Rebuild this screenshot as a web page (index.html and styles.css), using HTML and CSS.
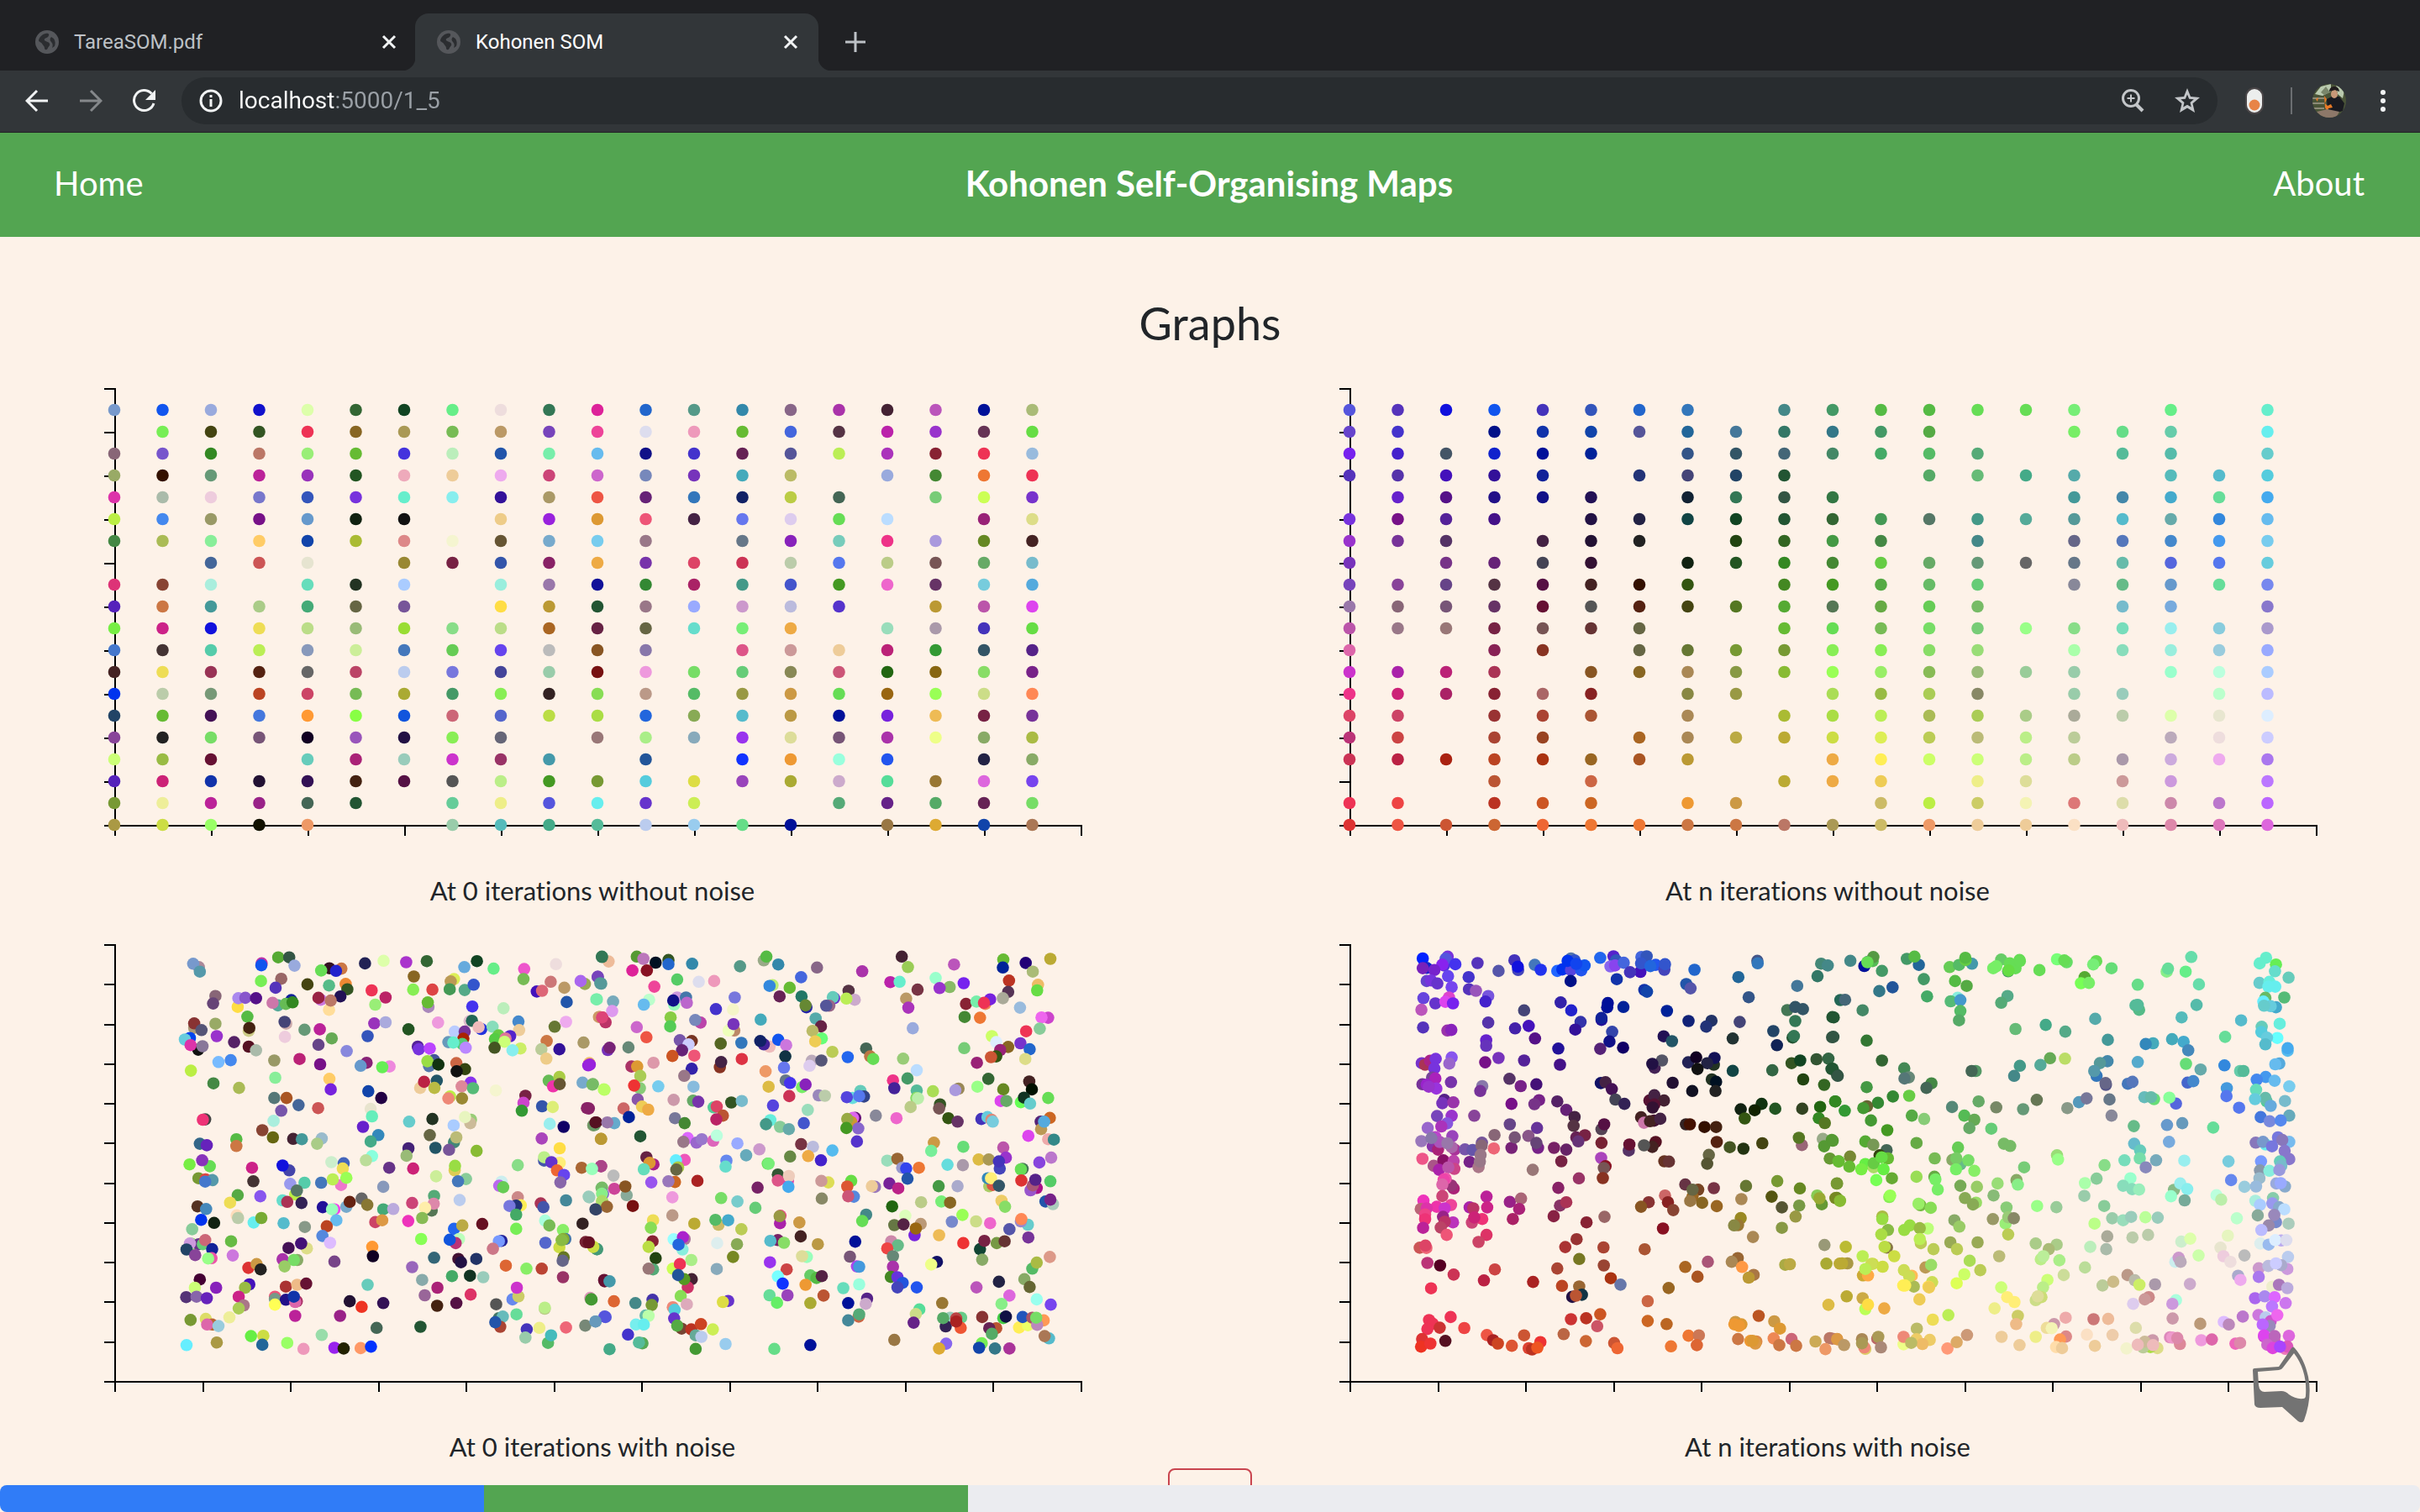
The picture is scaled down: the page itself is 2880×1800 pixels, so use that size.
FILE: index.html
```html
<!DOCTYPE html>
<html lang="en">
<head>
<meta charset="utf-8">
<title>Kohonen SOM</title>
<link rel="stylesheet" href="styles.css">
</head>
<body>
<div class="tabs">
  <div class="tab">
    <svg class="globe" viewBox="0 0 28 28"><circle cx="14" cy="14" r="14"/><path d="M12 4c5-1 5 2 3 4s-5 1-4 4c1 2 5 1 6 4 1 2-1 3-2 5-1 3-4 3-4 0 0-2-2-3-3-5s-4-2-4-4c1-4 4-7 8-8zM19 8l3 2c2 3 2 6 1 9l-3 2c1-3 1-5-1-7s-2-4 0-6z"/></svg>
    <span class="tab-title">TareaSOM.pdf</span>
    <button class="icon" aria-label="Close tab"><svg viewBox="0 0 18 18" width="18" height="18"><path d="M2 2l14 14M16 2L2 16"/></svg></button>
  </div>
  <div class="tab active">
    <svg class="globe" viewBox="0 0 28 28"><circle cx="14" cy="14" r="14"/><path d="M12 4c5-1 5 2 3 4s-5 1-4 4c1 2 5 1 6 4 1 2-1 3-2 5-1 3-4 3-4 0 0-2-2-3-3-5s-4-2-4-4c1-4 4-7 8-8zM19 8l3 2c2 3 2 6 1 9l-3 2c1-3 1-5-1-7s-2-4 0-6z"/></svg>
    <span class="tab-title">Kohonen SOM</span>
    <button class="icon" aria-label="Close tab"><svg viewBox="0 0 18 18" width="18" height="18"><path d="M2 2l14 14M16 2L2 16"/></svg></button>
  </div>
  <button class="icon new-tab" aria-label="New tab"><svg viewBox="0 0 24 24" width="24" height="24"><path d="M12 0v24M0 12h24"/></svg></button>
</div>
<div class="toolbar">
  <button class="icon" aria-label="Back"><svg viewBox="0 0 28 28" width="28" height="28"><path d="M27 14H3M14 2L2 14l12 12"/></svg></button>
  <button class="icon dim" aria-label="Forward"><svg viewBox="0 0 28 28" width="28" height="28"><path d="M1 14h24M14 2l12 12-12 12"/></svg></button>
  <button class="icon" aria-label="Reload"><svg viewBox="0 0 28 28" width="28" height="28"><path d="M25 17A12 12 0 1 1 22.500 5.500"/><path class="solid" d="M27 1v12H15z"/></svg></button>
  <div class="omnibox">
    <svg class="light" viewBox="0 0 28 28" width="28" height="28"><circle cx="14" cy="14" r="12"/><path d="M14 12v9M14 7v3"/></svg>
    <input class="url" aria-label="Address" value="localhost:5000/1_5">
    <button class="icon soft" aria-label="Zoom"><svg viewBox="0 0 28 28" width="28" height="28"><circle cx="12" cy="11" r="9.500"/><path d="M18 18l8 8" stroke-width="4"/><path d="M12 6.500v9M7.500 11h9" stroke-width="2"/></svg></button>
    <button class="icon soft" aria-label="Bookmark"><svg viewBox="0 0 30 30" width="30" height="30"><path class="solid" fill-rule="evenodd" d="M15 0l4 10 11 1-8.500 7.300L24 29l-9-5.600L6 29l2.500-10.700L0 11l11-1zM15 7.500l-2.200 5.300-5.600.5 4.300 3.700-1.300 5.600L15 19.700l4.800 2.900-1.300-5.600 4.300-3.700-5.600-.5z"/></svg></button>
  </div>
  <button class="icon" aria-label="Extension"><svg viewBox="0 0 22 32" width="22" height="32"><rect class="pill" x="1" y="1" width="20" height="30" rx="10"/><circle class="knob" cx="11" cy="21" r="6.500"/></svg></button>
  <span class="rule"></span>
  <button class="icon profile" aria-label="Profile"><svg class="avatar" viewBox="0 0 40 40" width="40" height="40"><rect width="40" height="40" fill="#4a5438"/><path fill="#b9c9ae" d="M3 12L10 3l12-3v9l-10 5zM28 0l10 8-2 9-6-5z"/><path fill="#79866a" d="M10 10l6-7 5 7-7 3z"/><path fill="#8d8b78" d="M0 16h14v2H0zM0 22h14v2H0zM0 28h14v2H0z"/><path fill="#191a20" d="M17 18l6-3 9 0 6 8-2 9-9 3-9-4z"/><path fill="#e87a26" d="M14 14l3 4-2 5 3 3 4-2 2 4-5 1-1 4-3-5zM4 18l3-2-1 5z"/><ellipse cx="26" cy="12" rx="4" ry="5" fill="#c79878"/><path fill="#221d1e" d="M20 9c0-8 12-8 12 0l-5-2z"/><path fill="#8d7869" d="M5 33l13-3 14 3-4 7H12z"/></svg></button>
  <button class="icon" aria-label="Menu"><svg viewBox="0 0 8 28" width="8" height="28"><g class="solid"><circle cx="4" cy="4" r="3"/><circle cx="4" cy="14" r="3"/><circle cx="4" cy="24" r="3"/></g></svg></button>
</div>
<header class="nav">
  <a href="#home">Home</a>
  <strong>Kohonen Self-Organising Maps</strong>
  <a class="end" href="#about">About</a>
</header>
<main class="page">
  <h1>Graphs</h1>
  <div class="charts">
    <figure><svg class="chart" id="grid-start" viewBox="0 0 1300 562"></svg><figcaption>At 0 iterations without noise</figcaption></figure>
    <figure><svg class="chart" id="grid-end" viewBox="0 0 1300 562"></svg><figcaption>At n iterations without noise</figcaption></figure>
    <figure><svg class="chart" id="noise-start" viewBox="0 0 1300 562"></svg><figcaption>At 0 iterations with noise</figcaption></figure>
    <figure><svg class="chart" id="noise-end" viewBox="0 0 1300 562"></svg><figcaption>At n iterations with noise</figcaption></figure>
  </div>
  <button class="action" aria-label="Stop"></button>
</main>
<div class="progress"><div class="bar blue" style="width:20%"></div><div class="bar green" style="width:20%"></div></div>
<svg class="horn" viewBox="0 0 73 94"><path fill-rule="evenodd" d="M3 29q0-2 2-2l29-2L49 3q2-3 4 0c8 9 13 20 16 34q5 24-5 52-2 4-7 1L38 73l-26 1q-6 0-7-4zM9 31l1 16q1 8 7 8l20-1q5 0 9 4 8 6 17 5 3 0 3-4 2-29-14-50L39 26q-2 3-5 3z"/></svg>
<script src="charts.js"></script>
</body>
</html>
```
FILE: styles.css
```css
* { box-sizing: border-box; }
body {
  margin: 0;
  height: 100vh;
  display: flex;
  flex-direction: column;
  overflow: hidden;
  background: #fdf2e8;
  color: #212529;
  font-family: Lato, sans-serif;
  font-variant-ligatures: none;
}
button { font: inherit; padding: 0; border: 0; background: none; }
svg { display: block; flex: none; }

.tabs { flex: none; display: flex; align-items: flex-end; height: 84px; padding-left: 14px; background: #202124; font-family: Roboto, sans-serif; }
.tab { position: relative; display: flex; align-items: center; gap: 18px; width: 480px; height: 68px; padding: 0 22px 0 28px; color: #bdc1c6; font-size: 24px; }
.tab.active { padding: 0 24px 0 26px; background: #323639; color: #fff; border-radius: 16px 16px 0 0; }
.tab.active::before, .tab.active::after { content: ""; position: absolute; bottom: 0; width: 16px; height: 16px; }
.tab.active::before { left: -16px; background: radial-gradient(circle at 0 0, #202124 16px, #323639 17px); }
.tab.active::after { right: -16px; background: radial-gradient(circle at 100% 0, #202124 16px, #323639 17px); }
.tab-title { flex: 1; }
.globe { width: 28px; height: 28px; fill: #55575b; }
.globe path { fill: #2b2d30; }
.new-tab { align-self: center; margin: 16px 0 0 32px; }

.icon { color: #f1f3f4; flex: none; }
.icon.new-tab { color: #bdc1c6; }
.icon svg, .light { fill: none; stroke: currentColor; stroke-width: 3; }
.icon .solid { fill: currentColor; stroke: none; }
.icon.dim { color: #85888b; }
.icon.soft { color: #c3c6c9; }
.light { color: #f1f3f4; }
.icon .pill { fill: #eceeed; stroke: #4b4749; stroke-width: 2; }
.icon .knob { fill: #e88446; stroke: none; }
.icon .avatar { stroke: none; border-radius: 50%; }

.toolbar { flex: none; display: flex; align-items: center; height: 74px; padding: 0 40px 2px 30px; background: #323639; border-bottom: 1px solid #202124; }
.toolbar > .icon { margin-right: 36px; }
.toolbar > .omnibox { margin-left: -6px; margin-right: 33px; }
.toolbar > .profile { margin-right: 40px; }
.toolbar > .icon:last-child { margin-right: 0; }
.rule { width: 2px; height: 32px; margin: 0 24px 0 -4px; background: #6b6e71; }
.omnibox { flex: 1; display: flex; align-items: center; gap: 19px; height: 56px; padding: 0 21px; border-radius: 28px; background: #282c2f; }
.omnibox .icon { margin-left: 17px; }
.url {
  flex: 1;
  min-width: 0;
  height: 40px;
  padding: 0;
  border: 0;
  outline: 0;
  font: 28px Roboto, sans-serif;
  color: transparent;
  background: linear-gradient(to right, #fff 114px, #9aa0a6 114px);
  -webkit-background-clip: text;
  background-clip: text;
}

.nav { flex: none; display: grid; grid-template-columns: 1fr auto 1fr; align-items: center; height: 124px; padding: 0 66px 4px 64px; background: #53a551; color: #fff; font-size: 40px; line-height: 60px; }
.nav a { color: inherit; text-decoration: none; }
.nav .end { text-align: right; }
.nav strong { font-size: 42px; font-weight: 700; }

.page { flex: 1; min-height: 0; overflow: hidden; padding-top: 67px; display: flex; flex-direction: column; align-items: center; }
h1 { flex: none; margin: 0 0 21px; font-size: 54px; line-height: 72px; font-weight: 400; }
.charts { flex: none; align-self: stretch; display: grid; grid-template-columns: 1fr 1fr; row-gap: 24px; margin: 0 -30px; }
figure { margin: 0; display: flex; flex-direction: column; align-items: center; }
figcaption { margin-top: 36px; font-size: 31px; line-height: 40px; }
.chart { width: 100%; max-width: 1300px; }
.axis { fill: none; stroke: #000; stroke-width: 2; }
.action { flex: none; width: 100px; height: 76px; margin-top: 6px; border: 2px solid #c9454f; border-radius: 8px; }

.progress { flex: none; display: flex; height: 32px; border-radius: 8px; overflow: hidden; background: #ebecf0; }
.bar.blue { background: #307cf7; }
.bar.green { background: #53a551; }
.horn { position: fixed; right: 129px; bottom: 104px; width: 73px; height: 94px; fill: #737373; }
```
FILE: charts.js
```js
// Plot area inside each chart's viewBox.
const LEFT = 82, TOP = 21, WIDTH = 1150, HEIGHT = 520;

function axes(ticks) {
  let d = `M${LEFT - 13} ${TOP}H${LEFT}V${TOP + HEIGHT}H${LEFT + WIDTH}v12`;
  for (let i = 0; i < ticks; i++) {
    d += `M${LEFT + Math.round(i * WIDTH / (ticks - 1))} ${TOP + HEIGHT}v12`;
    d += `M${LEFT} ${TOP + Math.round(i * HEIGHT / (ticks - 1))}h-13`;
  }
  return `<path class="axis" d="${d}"/>`;
}
const dot = (x, y, c) => `<circle cx="${(LEFT + x).toFixed(1)}" cy="${(TOP + y).toFixed(1)}" r="7.300" fill="#${c}"/>`;

// One row per line, one neuron per entry; "-" marks an empty cell.
function drawGrid(id, rows) {
  let out = axes(11);
  rows.trim().split("\n").forEach((row, r) => row.trim().split(/\s+/).forEach((c, i) => {
    if (c !== "-") out += dot(i * 57.5 - 1, 25 + r * 26, c);
  }));
  document.getElementById(id).innerHTML = out;
}

// Samples come in batches, each with its own origin and units per pixel.
function drawNoise(id, batches) {
  let out = axes(12);
  for (const b of batches) {
    for (const s of b.data.trim().split(/\s+/)) {
      const [x, y, c] = s.split(",");
      out += dot((x - b.x0) / b.kx, (y - b.y0) / b.ky, c);
    }
  }
  document.getElementById(id).innerHTML = out;
}

drawGrid("grid-start", `
79c 15e 9ad 11c dfa 363 142 6e8 edd 375 d29 26c 598 38a 868 a3a 423 b5b 019 ab7
- 7e5 441 352 e35 862 a95 7b5 b96 74b e49 dde e9b 6b3 46d 534 b2a 93c 635 6d4
867 75c 382 b76 9e7 6b3 43d beb 25a 7ea 6be 118 43c 625 559 be5 a3b 823 e35 9bd
9a6 310 697 b29 93b 252 eab ec9 eae c47 c6c 78b 73b 4ab bb6 - 9ad 483 e73 e35
d3a aba ecd 77c 35b 73d 6ec 8ee 319 a96 e54 627 37b 126 bc4 465 - 7c7 cf5 73c
be4 48e 996 718 69c 121 111 - ec8 92d d93 e57 424 67e dce 6d5 bdf - 927 dd8
484 ab5 8e9 fc6 14a ab3 d88 f5f5d0 653 7ac 7ce 978 - 678 82b 7cb e38 a9d 682 422
- - 469 c55 e6e4d0 - 983 724 35a 826 ea4 73a d46 c35 bca 57e bc8 755 6a6 7bc
d37 843 aed - 6db 232 acf - 9ed 97a 119 383 a26 498 45c 492 e6c 636 7cd 5ad
52b c74 499 ac8 4a7 664 759 - fd4 b93 253 978 9af c9c bbd 53c - b93 b5a d4e
7e4 c28 11d ed5 bd8 9b7 9d3 8d8 bd8 a62 624 664 6dc 7e7 ea4 - 9db a9a 43b 6d4
47c 433 5ca be5 89b ce9 47b 6c5 64e bbb 852 87a - d58 c99 ec9 b27 393 356 528
422 ed5 935 521 666 b46 bce 77d 449 9ca 711 e9d 7d6 6c7 885 c57 261 861 8d6 728
03e bca 797 b42 c46 7b5 aa3 496 8e5 322 8d5 b98 5b6 994 c94 6d5 961 9f5 cd8 f85
246 6b3 415 47d f93 8f4 15d c67 56c bd4 ad4 26d 8a5 5bc b94 019 72d eb5 724 739
849 222 7d6 757 102 95b 214 8e5 667 - 977 ae8 8ab 93e dd9 757 a3a ef8 8a6 ab4
cf7 9b4 613 - 6cb a27 9cb c3c 936 49a - 259 - 13f e93 9fd 25e - 224 8a6
52b c27 13a 213 315 421 514 555 be8 492 793 5cd dd4 94b aa3 cac 5d9 973 d6d 74e
793 ee9 b29 928 465 253 - 6c9 ee8 55d 6ee 63c ce5 - - 5a7 628 5a6 625 7d6
a94 cd4 9f6 110 e96 - - 9ca 5bb 4a8 5b9 bce 9ce 6d8 019 - 974 da3 14a a75`);

drawGrid("grid-end", `
55d 53b 11d 15e 43b 35b 26c 37b - 488 496 5b4 5b4 6d5 6d5 7e7 - 6e8 - 6ec
64c 43c - 018 13a 14a 559 269 479 376 378 496 5a4 - - 7e6 6d8 6ca - 6ee
72e 42c 456 12c 019 029 - 358 356 467 486 4a6 5b6 5a7 - - 5b9 5ba - 6cc
53b 53a 41b 319 129 - 237 447 246 253 - - 5a6 6b7 4a8 5aa - 5bb 5bc 5cd
- 62c 518 218 118 215 - 123 375 354 374 - - - - 499 48a 4ac 6d9 4ae
73d 718 529 418 - 214 224 144 142 253 363 495 576 498 5a9 599 5bc 6aa 38d 6be
93c 739 536 - 424 213 222 - 241 362 494 484 - 488 - 668 57b 48c 49e 7ce
73b - 738 627 445 313 - 121 252 382 483 6c4 6a6 697 666 678 6ba 56d 57e 6cd
74b 849 648 534 514 422 310 351 - 482 492 5a4 6b6 6c7 - 889 6b8 69c 6d9 78e
97a 867 757 636 613 555 521 441 572 5a3 575 6a4 6c5 7b6 - - 7bc 7ad - 87c
b5a 978 977 724 755 633 664 - - 6b3 6d5 7b5 7d6 7c7 9f8 8d8 7db 9ee 8cd a9c
d6a - - 825 832 - 664 673 793 793 8e5 8e5 8d6 9d7 - afa 8db 9ed 9cd 9af
c3c a2a b27 a35 - 852 862 a85 894 8b3 9f5 9e6 8b5 9b7 9c9 9ca - 9fc bfd acf
e38 c27 a26 823 a66 822 - 884 994 - ad5 9b4 ac5 886 - 9ca 9cb - bfc bbf
d46 c46 - 933 a43 a53 - a85 - ab3 ad4 be5 ab5 ac5 ac8 aa9 bca dfa e8e6d0 def
b37 c44 - a43 942 - a62 a85 ba4 ba3 cd4 de5 bc5 bb7 be8 bc9 - bab edd ccf
c35 b24 a21 b42 a31 962 a52 b93 - - ea4 fe5 cf6 cf7 be8 bc8 a9a cad eae a7e
- - - b53 - c64 - - - ba3 ea4 ec5 - ee8 dd9 - c99 c9d - b7f
e35 e44 - b32 c52 c62 - e93 c94 - - cb6 be4 cc6 f4f3b4 d77 dda c8a b7c b6f
d33 e54 c53 c63 e63 e73 e73 c74 c74 b76 a95 cb6 e96 ec9 ec9 fbe0c4 ebb d8a d7b d6d`);

drawNoise("noise-start", [
{ x0: 93, kx: 2.529, y0: 55, ky: 2.24, data: `
345,114,a89 328,105,79c 348,126,59a 534,104,b3a 533,109,15e 584,88,5a3 617,88,354 633,110,9ad 532,151,7e5 593,145,966 576,169,53b
738,117,312 774,118,c74 713,123,6d5 758,124,22c 737,163,5b8 787,159,e83 792,173,352 672,160,441 845,104,225 901,97,dfa 969,101,a3c
1031,98,363 1182,98,142 1144,114,6ad 1232,118,6e8 1324,119,e5c 1322,146,7b5 1420,106,edd 992,139,862 1113,146,de5 1103,152,b95
1100,173,495 1145,175,5a8 1172,161,35c 990,174,8e5 1048,174,d44 865,176,e35 907,195,b26 876,214,9e7 1404,153,c77 1362,179,41b
1378,177,d67 1445,169,b96 1507,159,9a5 1494,151,a6e 1546,140,74b 1558,86,375 1556,158,599 1452,207,25a 1543,200,7ea
395,191,867 388,211,647 462,220,fd4 464,197,a8e 485,196,85c 517,197,518 623,202,129 583,216,5a9 567,209,c7a 607,212,6b5 627,208,382
771,192,215 712,201,c7d 705,196,924 737,228,fd9 742,203,b76 1036,220,a8b 1034,208,6b3 1168,219,43e 1262,224,beb 1065,262,e9d
491,246,5b4 331,276,a97 331,264,833 353,282,557 395,265,9a6 399,298,93c 318,303,04e 303,307,6cd 343,334,111 320,322,d3a 356,325,879
495,284,cc8 497,276,421 608,265,caa 603,260,447 663,281,697 709,280,b29 745,304,6a5 705,321,648 604,300,ecd 451,314,526 495,326,512
517,336,aba 790,338,88d 873,264,93b 907,261,aad 853,298,35b 976,280,252 1160,258,dbc 1167,257,265 1195,279,23d 1187,274,ebb
1229,273,8db 1307,259,48c 1309,282,ec9 1282,298,52c 1247,296,6c4 1236,306,5c4 1268,304,d79 1265,313,cf7 1235,329,452 1313,331,ce6 1289,336,8ee
1115,286,bcf 1145,286,739 1141,305,a20 1096,314,69b 1138,319,5c7 1111,315,6ec 1148,329,b8f 1004,326,529 1007,333,73d 1040,331,b4f
1416,273,673 1450,260,eae 1392,311,c74 1376,333,bc9 1391,358,ec8 1430,333,319 1503,315,a96 1552,247,c96 1560,248,d47
404,367,7bf 441,362,48e 321,390,be4 389,424,484 466,436,ab5 572,363,996 648,359,b27 575,409,8e9 710,373,718 738,412,fc6 742,440,72d
850,369,827 832,377,69c 919,379,e8d 897,381,6e5 855,445,14a 894,463,204 704,490,c55 572,463,577 609,463,a52 593,497,75a 645,482,469
1053,362,459 1038,378,57a 1033,365,9d4 1066,374,131 1120,370,c64 1146,386,341 1121,392,111 1011,436,ec9 1023,420,b24 1061,417,256
1054,436,bb4 1163,422,83e 1136,432,d89 1170,437,5b7 1101,459,be4 1096,464,e87 1137,464,983 1239,443,f5f5cf 1328,457,724 1322,476,c4c 1317,497,393
1398,417,6b5 1430,407,ac4 1411,432,e3a 1431,426,653 1378,485,35a 1410,487,de7 1520,370,eb6 1517,376,92d 1500,422,7ac 1531,426,7b6 1513,490,826
1566,441,bf6 364,520,444 357,521,e37 570,524,aed 536,549,843 568,568,661 629,572,423 655,573,499 715,571,9bc 701,585,ac8
862,492,e8e4ce 866,512,6eb 839,540,62c 885,562,38b 862,579,4a8 978,526,6cc 1048,519,232 1164,521,9c7 1162,530,cb9 1146,514,e8f5bf
1112,536,acf 1040,562,664 1113,581,487 1120,568,bb7 1098,601,759 1057,596,256 1181,604,8b3 976,597,427 970,617,9b7
1401,532,9ee 1443,540,106 1377,571,a4b 1431,597,fd4 1431,636,fe7 1532,536,796 1541,528,512 1555,572,b93
348,585,368 369,589,62b 458,573,5b4 458,591,c74 317,640,7e4 378,645,6d5 355,629,83b 505,649,c28 617,656,44a 597,643,11d
344,677,793 365,680,d44 386,682,59a 364,686,47c 509,685,433 620,692,99e 663,689,5ca 713,689,47b 635,720,be4 640,710,576
744,634,cec 781,637,46b 778,651,ed5 773,695,e7c 789,676,9f5 748,680,be5 866,618,8fd 848,629,bd9 918,649,638 900,700,89b
990,651,c27 1115,656,dc5 1116,644,9d4 1059,672,ce9 1149,679,8c9 1125,685,47b 1305,642,8d8 1256,686,cee 1249,697,b6e 1261,701,6c5
1384,630,45a 1384,621,be8 1406,634,63c 1423,656,e63 1444,668,64e 1433,688,86a 1497,649,a63 1529,652,9fb 1555,645,a48
462,722,5a4 439,742,ed5 530,725,85e 597,736,6dc 611,740,a35 654,743,325 718,754,219 753,760,e4e 789,753,7ac 746,760,9fb 799,740,621
835,731,666 852,748,873 900,760,4a7 930,759,bad 987,743,c47 1053,724,5a7 1046,763,575 1052,745,d8a 1026,756,fea 1130,735,bce
1305,728,c88 1314,749,fe5 1300,750,237 1280,751,77d 1300,774,4a6 1374,744,a35 1382,754,45a 1450,736,489 1518,726,9cb
341,752,532 367,759,48b 352,788,03e 391,796,121 325,813,8c9 459,776,fdb 463,783,bca 510,795,6ee 533,783,7a3 600,797,5bc
759,789,6be 730,805,b42 664,807,898 717,831,58d 740,849,dbf 876,794,c46 897,789,d94 975,791,e3b 1017,783,8b5 1198,799,612
1113,812,26e 1138,803,ba4 1300,812,7e5 1387,790,afd 1400,803,7b5 1441,815,8e6 1500,798,322 1541,760,447 1559,738,ad6 1557,703,7b7
324,852,8e6 345,853,638 357,853,6c7 364,842,c67 318,851,c9d 308,867,246 334,882,849 385,866,129 383,890,e5a 373,891,9f8 442,845,6b4
447,883,c7d 615,863,415 670,864,dd8 653,851,417 641,895,8a6 597,893,a3a 631,895,7d6 603,912,9c6 753,899,748
867,860,f93 869,885,102 1014,839,8f5 1128,839,bfb 1118,850,b37 1100,841,15d 1053,889,367 1126,892,413 1134,901,214 1180,892,236
987,914,96b 1256,844,229 1248,845,79f 1230,865,c78 1388,849,56c 1448,839,47a 1442,839,8a3 1430,861,cd4 1437,842,8b4 1443,888,672 1440,897,668
1509,847,723 1544,866,497 1534,861,cd4 1269,910,d63 1331,918,8e6 1377,918,b43 494,916,d33 519,906,c94 531,920,222
348,947,403 333,969,cf7 397,969,82b 307,994,537 338,993,86a 369,997,62b 497,960,41b 484,969,9b4 465,993,c28 480,1016,a78 465,1024,ac5
607,966,a33 641,961,eb8 668,958,613 574,993,e57 574,999,798 640,1005,a36 607,1001,218 635,1007,d6a 631,993,13a 574,1014,ff5
853,961,6cb 799,1005,213 835,1020,e32 900,1010,315 770,1044,928 635,1044,b29 1017,948,8aa 1107,938,4a6 1161,937,132 1201,941,9cb
1063,969,a27 1025,989,969 1062,1017,421 1120,1010,514 1163,987,d36 1289,1000,68e 1307,992,cc6 1302,969,c3c 1240,1013,555
1441,941,936 1386,1025,bc8 1386,1022,be8 1523,996,d9b 1527,1000,493 320,1055,793 366,1052,dd6 385,1067,b63 370,1067,d6a 404,1071,9cd
437,1048,ee9 502,1098,6e4 539,1097,cd4 536,1121,269 611,1116,9f6 660,1132,e9b 715,1095,9da 753,1129,92e 781,1131,220 832,1130,f96 863,1126,03f
880,1076,465 1012,1073,253 1248,1050,476 1260,1046,6bb 1252,1073,a43 1237,1061,25a 1301,1040,6d9 1332,1080,43b 1370,1076,ee8 1328,1102,9ca
1450,1075,e67 1508,1070,787 1539,1059,69b 1566,1046,55d 1396,1116,5b6 1405,1096,4bb 308,1122,6ef 399,1115,a94 1565,948,613` },
{ x0: -1076, kx: 1.912, y0: 55, ky: 2.24, data: `
47,99,eb9 32,87,375 111,86,593 126,92,b7b 154,102,012 183,95,352 183,106,26c 237,105,38a 101,123,d29 134,123,812 22,140,74b 28,157,599
151,166,e49 203,147,5c6 252,153,dde 287,151,e9b 346,112,598 400,96,9a8 406,86,5b4 433,107,38a 485,141,46d 420,162,be7 413,164,38d 459,169,6b3
521,115,868 593,177,534 624,125,a3a 714,86,423 728,114,9c5 688,154,b2a 709,153,6ec 750,174,734 724,198,b96 791,143,9fc 833,107,b5b
823,167,8b6 800,170,93c 855,157,72e 945,94,6b3 944,115,029 958,150,b32 996,103,207 1012,126,ab7 1052,92,ba3 1024,161,eb6 1022,176,6d4
19,200,7ea 57,206,7ab 55,231,d9e 25,247,c96 40,261,b36 32,248,d47 139,201,bfc 127,214,6be 196,214,9fb 203,195,c9d 223,195,47a 225,209,b6c
194,203,118 188,248,8c4 187,272,5c5 111,274,c6c 133,301,e54 291,226,43c 334,195,77d 330,227,f5f5c8 256,262,b4a 244,255,78b
393,254,4ab 436,192,625 486,192,276 497,221,22a 495,216,683 560,197,63c 557,194,6cb 607,201,cac 588,198,be5 549,217,968 542,217,559 518,251,5aa
530,272,624 511,284,bb6 532,304,6f7 517,312,ec5 729,222,a3b 739,277,9ad 860,212,823 857,247,483 892,249,e73 884,206,7ea 904,212,e85 915,200,72d 901,209,e35
956,180,535 944,197,aa9 983,222,9bd 1047,249,c4c 1032,248,e6e 1028,278,8c9 997,285,e35 333,283,b86 320,283,efb 331,266,73b
209,309,75a 236,311,732 229,320,ccf 214,336,627 192,351,c52 242,350,e57 302,318,562 349,316,37b 300,381,832 303,367,424 350,359,d34
413,326,ebb 400,320,429 392,311,126 433,308,15e 451,322,c7d 449,352,134 446,382,67e 556,340,bc5 509,364,bab 531,363,557 504,377,dce 591,354,26e
633,331,465 642,352,b74 649,359,6d5 717,358,9c7 748,389,bdf 856,330,7c7 919,298,cf6 929,314,def 956,327,862 938,335,927 929,352,351 917,354,c53
984,317,73c 1005,333,26c 995,359,dd8 885,369,927 45,335,73b 49,329,727 92,328,687 4,374,92d 149,369,d9a 99,379,a36 112,379,d93 119,404,ac5
236,385,32a 219,404,978 240,433,8bd 160,432,7ce 118,437,8c7 105,430,e33 36,440,bf6 10,427,7b6 404,392,e96 411,433,db4
450,416,678 460,423,43e 487,434,7e6 495,427,82b 458,458,c35 421,483,54d 525,456,98b 539,457,bca 500,495,9db 694,416,e38 727,411,496
697,437,429 748,443,5b9 785,445,ad5 843,438,985 836,442,a9d 886,433,9f8 911,412,363 945,440,682 1004,419,422 1010,440,010
113,467,85a 81,491,c66 123,486,ec5 137,494,ea4 195,468,c9a 239,470,6a6 251,473,73a 286,488,5c9 293,486,d46 326,475,352 350,471,7bc
620,444,6cb 602,463,6dd 628,459,348 589,461,54d 617,458,57e 747,463,8d6 751,464,bea 734,487,bc8 801,480,352 799,491,755 820,517,351 841,526,636
939,471,d4e 952,471,6a6 985,474,6f5 992,462,132 1006,478,6cc 1047,463,6d5 93,514,029 198,517,779 220,530,483 307,510,b53 292,520,b26
2,491,826 15,535,696 17,528,512 60,530,6ac 44,528,97a 30,572,b93 119,565,253 415,522,6ed 405,533,498 437,540,8c9 457,546,6aa 491,530,45c
655,510,889 702,517,e6c 608,516,617 603,516,d6e 599,527,c93 590,519,9a4 615,544,86c 588,543,492 612,579,53c 895,519,43b 909,514,6cd 918,521,d87 921,526,7cd
1051,516,c62 1030,526,527 1031,546,b95 1038,526,5ad 1002,564,d4e 1047,573,eaa 1060,574,388 227,570,d6f 217,580,978 247,582,96c 259,573,97c 285,577,d6b 293,563,bfd
340,584,9af 390,600,c9c 360,616,6ab 485,586,734 512,593,bbd 501,618,ea4 556,603,5be 530,629,42c 460,619,684 409,638,6d5 411,638,7e7
787,582,c94 781,604,7e9 854,593,6d7 945,595,b5a 853,642,a9a 818,641,6dd 133,621,624 149,640,a28 140,636,d93 127,653,6db 30,645,a48 9,652,9fb 58,670,bbb
220,628,e5b 200,629,6ef 205,648,ac4 201,654,664 315,630,68e 313,646,6dc 681,630,9db 704,625,963 715,649,99c 724,651,34e 753,649,e73 727,678,25a
889,627,db4 912,627,a95 951,622,93c 937,651,44b 935,632,43b 1027,635,84d 1054,622,b7c 989,652,475 985,653,6d5 144,688,95e 198,687,c62 183,685,97b 249,684,a22
386,702,726 432,667,353 455,684,d4a 457,671,ecb 432,683,d58 456,700,4ae 547,688,dd5 531,684,c99 599,684,6d4 590,699,d53 605,726,58d 592,725,c57
653,700,97b 646,698,ec9 686,691,729 706,704,b28 798,698,494 841,698,aac 913,698,ac6 921,695,d54 910,677,38b 917,677,fe7 935,697,356
986,683,d33 1021,703,a18 1007,709,95c 1012,696,a57 1018,681,528 1052,685,5c6 32,702,7b6 60,705,c49 88,722,8a9 85,699,852 3,728,9cb 34,719,73d 32,718,8e8 32,738,ad6
43,753,963 17,760,346 102,751,711 192,728,e9d 303,730,7d6 340,739,7cc 381,756,6c7 532,731,886 692,752,261 758,741,bc8 804,739,7e7 824,742,862
941,737,ec6 949,753,8d6 1041,739,25a 1058,746,acb 1052,734,728 192,776,b98 148,789,ed5 143,809,8d5 242,798,ba3 297,801,cb6 290,788,5b6 319,789,4ac 349,813,bc5
438,777,e48 437,797,a2a 436,778,994 481,795,c94 633,774,488 624,791,6d5 722,777,dfb 697,802,674 718,800,524 757,799,b97 743,829,72d 746,811,961
852,775,9f5 828,793,78c 883,792,cd8 915,797,e6c 1001,801,6cc 985,792,98c 986,786,f85 959,813,55a 799,829,eb5 1002,835,739
147,845,823 138,860,bd4 20,866,497 12,860,cd4 2,848,612 195,840,9ff 220,839,a79 216,834,a2c 215,867,8ed 206,854,26d 294,850,dee 339,853,8a5
432,842,726 415,844,5bc 446,849,8d6 484,832,422 523,853,b94 608,846,019 690,845,c8a 705,856,6b8 681,864,e44 694,885,687 596,886,757
854,850,e33 892,866,143 902,844,724 930,850,794 948,845,633 897,894,8a6 154,890,241 148,920,5a7 138,918,977 235,895,ae8 330,887,782 293,919,8ab
193,918,cf5 209,906,e35 236,946,423 227,968,c36 219,946,592 205,935,259 498,887,9fb 487,885,dd9 414,901,93e 452,920,c44 432,939,7ff 443,958,13f
506,936,6c6 520,943,5b4 532,938,524 495,961,e93 612,912,a4e 617,913,49d 694,913,a3a 689,940,482 704,941,63d 716,956,25d 704,968,44b 748,968,25e
794,900,116 781,907,ef8 1051,887,d98 1011,918,5b6 1021,902,ab4 993,946,8a6 1005,967,663 935,953,224 884,968,b5b 38,952,613 49,952,49a
211,991,8d5 193,1021,e87 225,1013,dab 197,1028,5cd 196,1051,63c 413,989,6d9 454,989,94b 430,1009,6e6 536,990,b53 506,1010,aa3 581,970,6db 617,960,9fd
635,998,528 592,1010,019 616,1046,c64 617,1040,5a7 632,1012,cac 592,1056,489 754,1027,5d9 746,1039,cd8 741,1062,628 806,1010,973
959,990,d6d 941,1012,8e8 1021,1000,9fe 1053,1014,74e 147,1001,43a 145,1015,793 108,1010,488 59,1005,d63 7,1000,493 131,1043,6ba 138,1044,bfa 40,1047,55d 17,1059,69b
109,1067,7ee 127,1067,6ee 91,1094,43c 124,1117,5a5 116,1115,5b9 49,1133,4a8 319,1004,63c 307,1007,dd4 213,1078,743 203,1070,5a4 235,1080,b32 257,1066,c42
284,1080,ce5 245,1096,6a9 258,1100,bce 245,1132,493 313,1119,9ce 424,1132,6d8 506,1122,019 697,1108,974 849,1049,6c8 824,1049,9cb 814,1072,325
808,1050,5a6 838,1051,b44 848,1076,e53 838,1059,a22 815,1118,86e 799,1131,da3 897,1047,833 945,1050,4c4 951,1046,114 929,1077,b53 913,1077,625
919,1092,5a6 896,1117,7e5 890,1129,14a 926,1131,378 959,1131,a39 981,1075,fe5 1001,1069,ef6 989,1047,25b 1011,1049,a56 1037,1056,f95 1022,1068,b8b 1020,1049,7d6
1049,1104,5bc 1039,1098,a75` }]);

drawNoise("noise-end", [
{ x0: 93, kx: 2.529, y0: 68, ky: 2.75, data: `
311,112,02f 323,143,12c 311,144,72b 375,135,53d 386,106,73d 380,113,55d 370,132,82e 346,150,72c 409,131,43e 387,170,64e 323,186,64c 336,184,73d
355,194,63c 398,206,74e 476,127,53b 449,173,43c 450,213,53b 471,218,95b 508,235,75d 500,253,42c 313,242,64d 307,280,b5b 349,259,63c
390,240,d4c 379,254,d4e 402,259,72e 312,338,53b 385,348,93a 397,346,82b 508,322,53a 539,153,55a 587,118,43b 598,150,44b 597,139,11d
648,133,47b 666,149,23e 757,112,57a 716,153,26f 731,148,03e 757,150,54d 768,118,35c 747,120,03e 788,151,25e 798,135,15e 773,130,14e
756,186,018 845,110,26e 885,105,52c 893,118,35b 876,138,86e 890,135,84e 916,126,46d 895,180,13a 966,156,41b 935,157,43b 969,107,46d
985,105,35b 968,128,35c 1012,133,25e 996,137,26d 1038,149,44b 1040,131,35c 978,215,13a 986,221,14a 1129,149,26c 1318,120,458 1319,128,37b
1261,173,269 1104,196,25a 1117,210,55a 1292,239,358 1438,202,479 1510,129,487 1530,135,488 1499,170,376 616,282,447
726,256,32a 758,282,22c 786,320,33a 770,345,319 589,341,42a 630,333,41b 649,374,518 719,407,219 868,258,019 866,272,019 915,271,029
849,313,219 849,307,129 881,352,34a 873,384,118 845,408,527 914,404,106 1046,284,029 1036,367,215 1061,383,256 1111,317,127 1180,316,236
1164,335,237 1265,320,447 1244,374,233 1366,350,246 1377,396,125 1408,281,475 1455,278,356 1432,271,356 1432,317,375 1424,371,253
1428,366,375 1544,304,253 1543,370,354 1568,248,265 502,380,62c 502,398,63b 539,438,73b 499,452,718 308,455,73c 318,460,a35 333,447,a28
350,441,73d 346,472,73d 398,436,85e 391,456,96c 616,446,529 724,460,418 339,502,749 349,505,a2b 310,524,739 323,525,92c 352,538,93d
329,532,93c 396,517,73a 490,530,87a 484,546,739 572,506,536 606,530,728 653,524,417 578,588,718 661,576,728 647,589,738 716,580,526
376,575,528 370,586,73b 403,583,93a 398,627,93c 354,628,74b 466,627,849 384,652,85d 367,662,a3b 326,667,96c 573,655,648 655,667,639
743,608,627 768,631,424 765,660,534 847,520,116 861,517,424 880,540,415 891,574,445 918,588,325 849,671,545 857,655,514
1009,470,425 1031,446,556 1002,457,214 1110,452,225 1134,436,102 1187,460,232 1189,438,115 1167,455,224 1138,474,111 1063,519,213
1181,508,232 1194,516,012 1192,546,222 1122,546,112 1244,480,144 1363,478,364 1421,455,352 1447,446,142 1496,442,353 1532,440,364
1541,474,253 1558,494,354 1456,508,241 1519,526,362 993,577,513 1008,560,424 1037,577,423 1008,590,513 1003,600,313 968,632,422
977,650,c7a 1007,643,413 995,645,422 1026,637,424 1103,655,322 1115,655,410 1159,664,310 1194,664,421 1196,713,521 1268,606,121
1331,588,131 1310,609,120 1280,636,351 1372,604,252 1453,604,342 1507,598,261 1552,580,382 1503,635,382 1521,651,572
307,710,97b 349,697,b4c 341,727,83a 357,738,a27 400,694,94b 362,713,a5b 337,700,87a 407,738,a39 398,730,a6a 385,717,97a
438,737,75a 461,739,65a 489,715,759 488,725,867 527,690,867 525,734,e67 452,778,728 485,755,978 479,795,a78 483,777,978 578,732,727
588,698,757 629,693,858 658,732,728 653,716,647 706,732,726 743,738,626 773,698,625 799,691,724 779,711,637 728,776,724 849,716,723
931,741,536 933,721,613 1012,713,512 1002,729,422 977,724,555 1235,730,452 1276,735,231 1333,717,441 1452,723,967 1443,699,572
1515,703,9a8 1542,706,593 1519,727,593 310,768,e58 344,791,a58 373,773,816 404,775,b4a 360,804,a2a 406,801,c48 388,796,b5a
642,804,977 848,765,a4b 861,792,812 856,798,755 853,831,832 781,832,936 719,863,826 1038,776,632 1052,777,633 1172,755,664 1167,784,553
1536,767,693 1562,776,6b3 404,865,a27 397,855,937 380,833,e5a 374,836,e4a 370,852,d6a 370,890,c47 503,892,b29 313,905,e3b
305,932,b67 396,919,e49 353,925,e3a 323,930,d3a 377,930,c3c 318,950,e48 318,966,e37 312,994,b29 372,958,928 402,976,b3b 377,974,b36
365,993,b46 383,1017,e57 452,927,a2a 463,930,b36 505,927,c28 490,965,e37 459,977,c47 466,960,c27 503,1017,d36 479,1040,c46
573,909,928 607,898,a67 601,932,a27 582,965,a26 724,921,836 743,910,a35 705,956,824 858,958,966 804,976,823 774,1031,933 740,1057,a33
1040,888,c66 991,910,833 968,925,852 1049,910,822 1065,936,843 1101,852,634 1140,869,742 1123,892,962 1116,906,974 1123,869,664
1187,864,734 1152,912,862 1196,923,962 1270,900,a85 1284,857,673 1378,841,793 1446,865,682 1361,892,551 1392,927,553 1444,921,794
1433,957,994 1392,994,894 1498,888,8c5 1512,917,693 1505,897,9a3 1557,849,793 1557,896,682 1566,905,8b3 1268,962,982 1260,985,973 1248,986,884
1034,996,812 1305,1024,a85 1520,1050,997 302,1059,c55 322,1060,e67 319,1052,d46 325,1109,b37 363,1117,502 404,1147,c35 336,1192,e35
495,1166,b24 528,1130,c44 643,1171,a22 716,1127,a43 782,1096,772 855,1058,a43 856,1117,943 877,1159,a31 906,1180,67a 730,1184,b42
782,1186,963 790,1213,134 761,1220,214 772,1216,b53 979,1064,a53 1101,1122,a62 1138,1154,a52 1051,1191,962 1169,1105,a57
1259,1093,963 1241,1105,a85 1272,1122,f94 1307,1148,a74 1292,1157,b93 1402,1115,aa4 1416,1113,ba4 1526,1111,aa3 1566,1111,ba3
1532,1246,db4 988,1234,c64 330,1296,e35 395,1286,e35 341,1308,e35 362,1321,c33 325,1325,e35 436,1322,e44 504,1345,e54 523,1362,a22
537,1373,c42 309,1358,d33 306,1383,e32 334,1373,e33 379,1364,512 579,1380,d53 616,1346,c53 665,1368,e33 630,1388,d43 640,1392,b32 656,1386,e52
757,1293,c33 803,1290,b32 845,1277,c52 836,1316,c56 735,1342,b64 802,1365,c63 887,1371,c53 897,1388,e63 988,1299,c62 1045,1309,b62
1058,1382,e73 1111,1347,e73 1142,1346,c75 1136,1378,d63 1252,1302,c94 1270,1310,d93 1249,1310,e93 1263,1315,e93 1322,1282,b52
1260,1358,c74 1297,1364,e93 1315,1366,d84 1312,1373,d94 1304,1364,d93 1369,1300,c94 1386,1324,d93 1367,1356,e85 1384,1378,c74
1421,1358,c67 1435,1380,c74 1493,1366,ca5 1558,1358,d94 1536,1355,b76 1523,1391,e96` },
{ x0: -1450, kx: 2.529, y0: 55, ky: 2.24, data: `
55,97,488 97,111,019 108,100,56a 122,98,5b5 124,87,594 106,101,6d5 150,124,496 142,178,378 182,168,259 39,201,467 92,229,486
225,92,496 261,108,269 248,86,5b4 276,146,496 286,192,4a6 354,114,6c5 382,108,5b6 421,105,49a 402,95,6c4 401,89,5b4 370,151,5b4 405,164,5a4
378,196,8ed 357,205,5b7 386,202,49c 386,231,5b6 382,256,5a6 509,94,6c6 485,117,7e6 494,112,7e6 530,125,496 564,95,6d5 552,117,6d5 535,104,6d5 531,123,6d4
565,98,6d5 624,122,6d5 528,191,5a8 509,209,5a7 552,279,6b7 643,268,4a8 702,286,5a8 677,93,7f7 706,101,6d6 699,96,6d5 795,98,6d5 786,107,7e7
841,117,6d7 760,141,5a3 749,157,7f5 773,156,7e6 920,161,6d8 913,216,5b9 924,228,5b8 920,215,5b9 792,252,5aa 830,308,499
1007,126,8e8 1011,118,6d9 1064,126,6e8 1081,87,6da 1104,160,6da 1097,215,5ba 1052,248,5bb 1231,256,5bc 1183,300,6d9
1306,89,6ec 1336,107,6e5 1287,104,6ec 1333,125,6dc 1374,142,6cb 1286,156,6cc 1316,153,6ed 1334,166,6ee 1313,166,6ee 1304,196,6b6 1361,195,5b7
1298,206,6ef 1336,221,4ac 1320,218,6cd 1300,217,6cc 1347,265,6ed 1293,273,6cb 1292,287,5cd 1340,303,6ff 1309,302,6cd 1304,320,5bc 1371,337,5be 1371,330,4ae
104,310,373 150,363,363 5,248,253 4,300,354 2,385,253 17,404,354 217,384,485 231,408,687 218,411,577 299,424,484 284,436,465
104,434,494 183,459,383 232,457,6c4 138,476,383 10,472,382 38,497,393 105,485,663 94,490,493 117,523,493 240,510,5a4 277,519,8c7 166,549,492
432,391,596 420,391,465 565,377,498 548,404,488 656,357,6a5 627,375,5a9 701,358,bd6 441,472,6a6 361,487,587 494,488,786 575,493,697
616,468,675 708,490,898 743,474,59b 766,464,779 829,365,48a 806,370,599 796,404,37b 789,391,59a 824,428,558 823,423,668 835,467,678 841,510,889
920,367,5ac 966,317,4ab 944,319,38b 1023,306,4ab 1058,313,4ac 1072,336,48b 1065,372,6d7 1109,387,6aa 890,425,47b 904,420,57b 1070,422,46c 1087,418,48c
1181,376,38d 1228,391,6ca 1238,391,5b9 1188,437,49d 1187,458,57e 1225,489,57e 1147,542,6d9 1035,478,56d 1015,462,8f9 969,466,6d7 940,461,6bb 960,461,6ba
1346,371,5ad 1334,373,6be 1305,407,49e 1278,414,48e 1332,417,6be 1376,432,7ce 1276,441,6db 1308,472,5c9 1304,463,6ba 1273,466,6cd 1363,471,7bc 1320,484,6ad
1290,514,47d 1376,510,6ab 1317,525,78d 1350,523,58e 398,510,5b5 428,521,6a5 413,543,6a6 479,545,6c7 517,585,7b6 536,591,7b6 908,538,6b8 1008,535,69c
1054,530,69b 1014,580,7ad 909,585,6bc 927,603,6cb 926,624,7da 880,629,7db 975,629,7ab 944,648,88b 1060,630,9ee 1193,632,7cd
2,577,593 100,579,5a3 164,602,465 143,616,341 124,588,795 254,583,6a4 379,595,6c5 54,619,783 20,632,6b3 52,646,6b3 100,639,6e4 88,653,7e4
125,648,ad6 125,637,6c4 168,624,6b3 149,621,6d4 155,653,6e4 309,624,7b5 362,628,8a6 386,640,6b8 374,624,7c6 410,629,7d6 373,653,7e6 428,657,8e6
15,691,793 10,730,782 24,737,8b3 133,682,7f5 180,677,6a3 254,673,9d5 308,673,6a4 311,680,7e6 318,707,7e6 172,727,8e5 175,723,9f5
386,697,7a5 436,700,9c6 400,730,8a5 433,742,9d6 424,747,8a5 498,691,9d7 486,723,8b7 555,682,8a6 559,694,8e8 578,648,7c7 677,616,9d7 680,627,9f8
820,642,8d8 796,678,8c9 761,690,afa 759,724,9ca 617,751,9f8 675,754,9c9 819,751,8c9 898,677,9fc 876,697,8db 903,706,8db 924,707,9eb 943,781,bf9
1029,708,8b8 1048,691,9ee 1069,706,8ee 1020,725,9fc 1061,736,7a9 1201,682,68e 1241,700,9cd 1157,722,bfd 1171,734,bea 1218,784,bfc
1275,582,87b 1305,587,6ee 1297,580,79c 1376,580,7be 1342,568,77d 1355,575,87b 1324,592,77d 1362,604,87c 1376,626,87c 1291,632,79f 1348,632,6cb
1288,656,89a 1316,657,8ed 1352,644,7bc 1346,655,99d 1286,677,9bc 1276,699,9bd 1363,699,8ac 1337,691,9ad 1350,690,9af 1327,730,8ca 1274,737,aed 1288,748,acf
1325,744,99e 1345,754,8ac 1361,760,bdf 1281,776,8a9 1336,794,78c 1331,775,98b 1374,798,acb 1314,803,98a 1292,815,bbf
151,779,ab4 151,786,9d4 168,815,8b4 148,827,ad4 217,815,9d4 234,803,9d4 288,811,bf7 264,810,9b4 266,749,7b4 297,756,8d5 260,745,9e6
267,850,bc5 264,839,be5 305,866,bc5 165,862,874 158,860,bd4 187,885,cd4 41,860,bb3 356,848,9a5 368,789,8a6 383,806,9c6 376,866,bc5
438,848,9a5 414,897,ad5 446,922,bc5 525,755,8c7 484,786,996 522,798,9e7 530,781,9c7 547,784,886 530,827,bc5 503,885,bb7
613,851,ac8 676,854,ac8 652,866,ab7 628,893,be8 636,885,be9 684,896,ae8 790,798,bf8 843,784,9ca 876,789,9db 900,780,9cb 980,782,9cb 951,828,bca
904,835,bca 828,832,aa9 825,866,aba 777,860,beb 761,915,bd9 697,935,cd9 1051,846,cec 1078,838,dfa 1103,883,cfa 1169,862,e8e5ce 1191,830,e6f5bf
1033,900,cee 1043,889,c9c 1049,900,bab 1178,885,ecd 1199,900,edd 1241,883,bbb 1289,851,dee 1352,843,bae 1314,854,9be 1334,842,def 1367,842,dde 1372,887,bce
46,904,a94 30,904,ba3 92,885,be5 122,905,cd4 152,913,cd4 118,906,cd5 93,936,ca3 108,936,fa4 100,919,be5 281,915,b95 298,908,9d6 216,922,cd5
240,937,fb5 301,954,cd5 290,966,fd5 246,966,ab5 232,939,cd5 214,963,fe5 220,963,fe5 292,968,ec5 44,992,ba3 92,997,ca4 100,1026,bf5 108,1014,fd4
157,1024,ea4 263,1000,ec5 398,933,cf6 375,957,df5 350,1042,be5 303,1054,ed5 255,1078,bb6 509,968,cf7 527,994,fe7 549,1007,fe7 489,1024,ee8
648,948,cf7 635,968,be8 613,1002,cd8 630,994,cd7 619,992,dd9 559,1044,cc6 554,1066,eb8 814,963,bc9 846,953,cb8 889,935,b98 911,949,bba 925,961,ce6
972,960,a9a 953,994,c88 941,1000,c99 906,1012,dce 1077,959,cac 1035,1002,afd 1024,1012,c9d 1222,937,aac 1229,948,eae
1284,917,c9c 1313,911,bbd 1370,919,c9d 1352,909,aac 1336,904,ccf 1284,940,a7e 1325,966,eec 1345,961,a7b 1370,970,bad 1273,997,a6e 1302,992,a8e
1332,994,d6f 1365,1010,c7e 1324,1019,b7f 1283,1042,c7d 1305,1048,bce 1320,1058,c5c 1340,1042,e6e 1317,1071,98b 1296,1067,b6f
703,1049,eaa 668,1066,c9a 646,1076,ed9 661,1077,f4f3b4 613,1100,ee8 704,1099,d88 686,1107,f95 674,1127,fda 692,1130,ec9 787,1053,c77 831,1052,eb9
767,1094,fbe0c4 844,1095,eca 791,1124,ec9 886,1131,f3f3cc 914,1076,dda 965,1109,c9a 979,1130,dd8 958,1127,ad4 936,1128,bc9 941,1113,cb9 920,1121,ebb 966,1122,ebb
1025,1051,c9a 1017,1101,d8b 1024,1102,e9c 1047,1119,d89 1039,1103,d8a 1108,1065,b97 1111,1109,e9d 1143,1107,d6a 1179,1060,dbf 1194,1067,b8b 1236,1046,b7c
1214,1118,e6b 1228,1116,d8a 1300,1099,c4c 1331,1108,e4b 1300,1096,d4e 1332,1098,b6b 1375,1097,d6d 1310,1121,c6c 1326,1130,d4d 1364,1132,e7b 1370,1126,d5b 1348,1126,a4f
1,1105,b76 15,1106,d94 36,1122,b96 100,1132,dc6 97,1128,e87 90,1106,a85 136,1105,b66 139,1100,a95 147,1128,a87 90,1117,a95
215,1120,ef8 215,1100,e87 254,1106,ec6 294,1108,ec6 272,1119,eb6 238,1116,bb6 347,1131,f97 375,1114,da6 406,1095,c97 510,1100,ec9 564,1122,ec9` }]);
```
